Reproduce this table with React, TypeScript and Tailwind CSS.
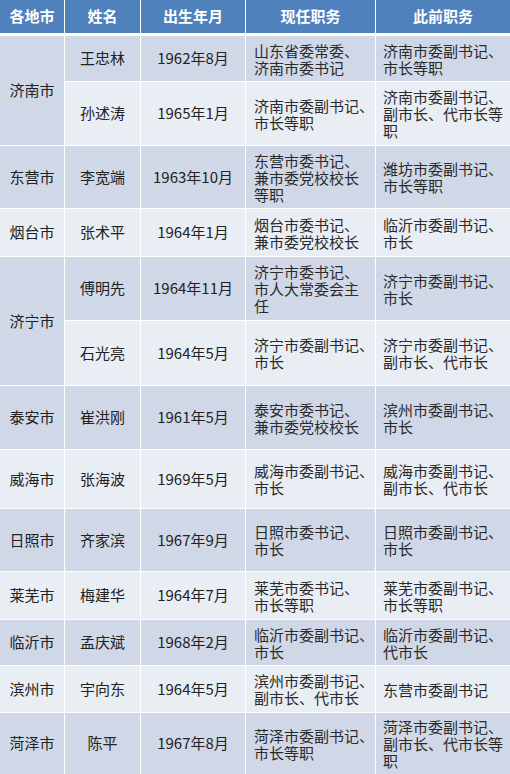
type Row = {
  city?: string;
  span?: boolean;
  name: string;
  born: string;
  now: string[];
  before: string[];
};

const rows: Row[] = [
  { city: "济南市", span: true, name: "王忠林", born: "1962年8月", now: ["山东省委常委、", "济南市委书记"], before: ["济南市委副书记、", "市长等职"] },
  { name: "孙述涛", born: "1965年1月", now: ["济南市委副书记、", "市长等职"], before: ["济南市委副书记、", "副市长、代市长等", "职"] },
  { city: "东营市", name: "李宽端", born: "1963年10月", now: ["东营市委书记、", "兼市委党校校长", "等职"], before: ["潍坊市委副书记、", "市长等职"] },
  { city: "烟台市", name: "张术平", born: "1964年1月", now: ["烟台市委书记、", "兼市委党校校长"], before: ["临沂市委副书记、", "市长"] },
  { city: "济宁市", span: true, name: "傅明先", born: "1964年11月", now: ["济宁市委书记、", "市人大常委会主", "任"], before: ["济宁市委副书记、", "市长"] },
  { name: "石光亮", born: "1964年5月", now: ["济宁市委副书记、", "市长"], before: ["济宁市委副书记、", "副市长、代市长"] },
  { city: "泰安市", name: "崔洪刚", born: "1961年5月", now: ["泰安市委书记、", "兼市委党校校长"], before: ["滨州市委副书记、", "市长"] },
  { city: "威海市", name: "张海波", born: "1969年5月", now: ["威海市委副书记、", "市长"], before: ["威海市委副书记、", "副市长、代市长"] },
  { city: "日照市", name: "齐家滨", born: "1967年9月", now: ["日照市委书记、", "市长"], before: ["日照市委副书记、", "市长"] },
  { city: "莱芜市", name: "梅建华", born: "1964年7月", now: ["莱芜市委书记、", "市长等职"], before: ["莱芜市委副书记、", "市长等职"] },
  { city: "临沂市", name: "孟庆斌", born: "1968年2月", now: ["临沂市委副书记、", "市长"], before: ["临沂市委副书记、", "代市长"] },
  { city: "滨州市", name: "宇向东", born: "1964年5月", now: ["滨州市委副书记、", "副市长、代市长"], before: ["东营市委副书记"] },
  { city: "菏泽市", name: "陈平", born: "1967年8月", now: ["菏泽市委副书记、", "市长等职"], before: ["菏泽市委副书记、", "副市长、代市长等", "职"] },
];

const headers = ["各地市", "姓名", "出生年月", "现任职务", "此前职务"];

function Lines({ lines }: { lines: string[] }) {
  return (
    <div className="leading-[17px] whitespace-nowrap">
      {lines.map((l, i) => (
        <div key={i}>{l}</div>
      ))}
    </div>
  );
}

export default function App() {
  return (
    <div
      className="w-[510px] h-[774px] bg-white text-[15px] text-[#222]"
      style={{ fontFamily: '"Noto Sans CJK SC", "Noto Sans", sans-serif' }}
    >
      <div className="grid grid-cols-[64px_75px_104px_129px_134px] gap-x-px h-[33px] mb-[3px]">
        {headers.map((h) => (
          <div key={h} className="bg-[#4f81bd] text-white font-bold flex items-center justify-center">
            {h}
          </div>
        ))}
      </div>
      <div className="grid grid-cols-[64px_75px_104px_129px_134px] grid-rows-[45px_63px_62px_47px_63px_64px_63px_58px_62px_47px_45px_46px_61px] gap-px">
        {rows.map((r, i) => {
          const bg = i % 2 === 0 ? "bg-[#d0d8e8]" : "bg-[#e9edf4]";
          return [
            r.city ? (
              <div
                key={`c${i}`}
                className={`${r.span ? "row-span-2" : ""} ${bg} flex items-center justify-center`}
              >
                {r.city}
              </div>
            ) : null,
            <div key={`n${i}`} className={`${bg} flex items-center justify-center`}>
              {r.name}
            </div>,
            <div key={`b${i}`} className={`${bg} flex items-center justify-center`}>
              {r.born}
            </div>,
            <div key={`w${i}`} className={`${bg} flex items-center pl-[8px] text-[#2a2a2a]`}>
              <Lines lines={r.now} />
            </div>,
            <div key={`p${i}`} className={`${bg} flex items-center pl-[7px] text-[#2a2a2a]`}>
              <Lines lines={r.before} />
            </div>,
          ];
        })}
      </div>
    </div>
  );
}
